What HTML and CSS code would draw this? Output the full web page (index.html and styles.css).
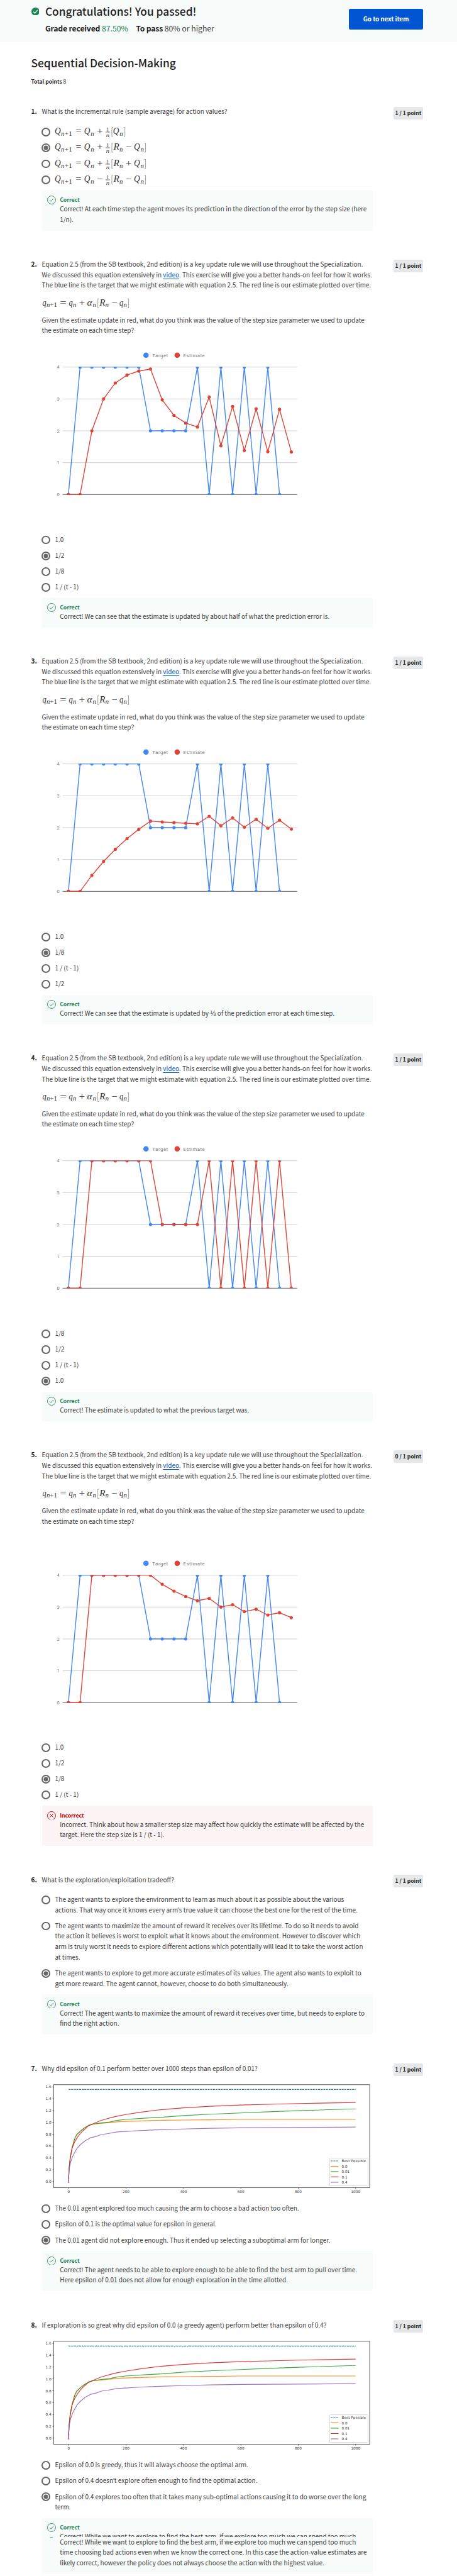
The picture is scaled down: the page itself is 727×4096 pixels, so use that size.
FILE: index.html
```html
<!DOCTYPE html>
<html lang="en">
<head>
<meta charset="utf-8">
<title>Sequential Decision-Making</title>
<link rel="stylesheet" href="styles.css">
</head>
<body>
<svg class="defs" width="0" height="0">
  <symbol id="ok" viewBox="0 0 18 18"><circle cx="9" cy="9" r="8.4" fill="none" stroke="#1f8354" stroke-width="1.1"/><path d="M5.2 9.4 7.8 12 12.7 6.3" fill="none" stroke="#1f8354" stroke-width="1.1"/></symbol>
  <symbol id="bad" viewBox="0 0 18 18"><circle cx="9" cy="9" r="8.4" fill="none" stroke="#d30001" stroke-width="1.2"/><path d="M5.2 5.2 12.8 12.8M12.8 5.2 5.2 12.8" fill="none" stroke="#d30001" stroke-width="1.2"/></symbol>
</svg>
<div class="page">
  <header class="banner">
    <svg class="banner-icon" viewBox="0 0 16 16"><circle cx="8" cy="8" r="8" fill="#1f8354"/><path d="M4 8.4 6.9 11.2 12 5.2" fill="none" stroke="#fff" stroke-width="1.7"/></svg>
    <div class="banner-text">
      <h1>Congratulations! You passed!</h1>
      <p class="grade"><b>Grade received</b> <span class="score">87.50%</span><b class="pass">To pass</b> 80% or higher</p>
    </div>
    <button class="next">Go to next item</button>
  </header>

  <main>
    <h2>Sequential Decision-Making</h2>
    <p class="total"><b>Total points</b> 8</p>

    <section class="question">
      <div class="num">1.</div>
      <div class="body">
        <p>What is the incremental rule (sample average) for action values?</p>
        <ul class="options math">
          <li><i class="radio"></i><span data-q="+|Q"></span></li>
          <li><i class="radio on"></i><span data-q="+|R−Q"></span></li>
          <li><i class="radio"></i><span data-q="+|R+Q"></span></li>
          <li><i class="radio"></i><span data-q="−|R−Q"></span></li>
        </ul>
        <div class="feedback"><svg class="mark"><use href="#ok"/></svg><div><h3>Correct</h3><p>Correct! At each time step the agent moves its prediction in the direction of the error by the step size (here<br>1/n).</p></div></div>
      </div>
      <div class="badge">1 / 1 point</div>
    </section>

    <section class="question">
      <div class="num">2.</div>
      <div class="body">
        <p>Equation 2.5 (from the SB textbook, 2nd edition) is a key update rule we will use throughout the Specialization.<br>We discussed this equation extensively in <a href="#">video</a>. This exercise will give you a better hands-on feel for how it works.<br>The blue line is the target that we might estimate with equation 2.5. The red line is our estimate plotted over time.</p>
        <div class="equation"></div>
        <p>Given the estimate update in red, what do you think was the value of the step size parameter we used to update<br>the estimate on each time step?</p>
        <div class="chart" data-step="half"></div>
        <ul class="options">
          <li><i class="radio"></i>1.0</li>
          <li><i class="radio on"></i>1/2</li>
          <li><i class="radio"></i>1/8</li>
          <li><i class="radio"></i>1 / (t - 1)</li>
        </ul>
        <div class="feedback"><svg class="mark"><use href="#ok"/></svg><div><h3>Correct</h3><p>Correct! We can see that the estimate is updated by about half of what the prediction error is.</p></div></div>
      </div>
      <div class="badge">1 / 1 point</div>
    </section>

    <section class="question">
      <div class="num">3.</div>
      <div class="body">
        <p>Equation 2.5 (from the SB textbook, 2nd edition) is a key update rule we will use throughout the Specialization.<br>We discussed this equation extensively in <a href="#">video</a>. This exercise will give you a better hands-on feel for how it works.<br>The blue line is the target that we might estimate with equation 2.5. The red line is our estimate plotted over time.</p>
        <div class="equation"></div>
        <p>Given the estimate update in red, what do you think was the value of the step size parameter we used to update<br>the estimate on each time step?</p>
        <div class="chart" data-step="eighth"></div>
        <ul class="options">
          <li><i class="radio"></i>1.0</li>
          <li><i class="radio on"></i>1/8</li>
          <li><i class="radio"></i>1 / (t - 1)</li>
          <li><i class="radio"></i>1/2</li>
        </ul>
        <div class="feedback"><svg class="mark"><use href="#ok"/></svg><div><h3>Correct</h3><p>Correct! We can see that the estimate is updated by <span class="frac">⅛</span> of the prediction error at each time step.</p></div></div>
      </div>
      <div class="badge">1 / 1 point</div>
    </section>

    <section class="question">
      <div class="num">4.</div>
      <div class="body">
        <p>Equation 2.5 (from the SB textbook, 2nd edition) is a key update rule we will use throughout the Specialization.<br>We discussed this equation extensively in <a href="#">video</a>. This exercise will give you a better hands-on feel for how it works.<br>The blue line is the target that we might estimate with equation 2.5. The red line is our estimate plotted over time.</p>
        <div class="equation"></div>
        <p>Given the estimate update in red, what do you think was the value of the step size parameter we used to update<br>the estimate on each time step?</p>
        <div class="chart" data-step="one"></div>
        <ul class="options">
          <li><i class="radio"></i>1/8</li>
          <li><i class="radio"></i>1/2</li>
          <li><i class="radio"></i>1 / (t - 1)</li>
          <li><i class="radio on"></i>1.0</li>
        </ul>
        <div class="feedback"><svg class="mark"><use href="#ok"/></svg><div><h3>Correct</h3><p>Correct! The estimate is updated to what the previous target was.</p></div></div>
      </div>
      <div class="badge">1 / 1 point</div>
    </section>

    <section class="question">
      <div class="num">5.</div>
      <div class="body">
        <p>Equation 2.5 (from the SB textbook, 2nd edition) is a key update rule we will use throughout the Specialization.<br>We discussed this equation extensively in <a href="#">video</a>. This exercise will give you a better hands-on feel for how it works.<br>The blue line is the target that we might estimate with equation 2.5. The red line is our estimate plotted over time.</p>
        <div class="equation"></div>
        <p>Given the estimate update in red, what do you think was the value of the step size parameter we used to update<br>the estimate on each time step?</p>
        <div class="chart spaced" data-step="average"></div>
        <ul class="options">
          <li><i class="radio"></i>1.0</li>
          <li><i class="radio"></i>1/2</li>
          <li><i class="radio on"></i>1/8</li>
          <li><i class="radio"></i>1 / (t - 1)</li>
        </ul>
        <div class="feedback wrong"><svg class="mark"><use href="#bad"/></svg><div><h3>Incorrect</h3><p>Incorrect. Think about how a smaller step size may affect how quickly the estimate will be affected by the<br>target. Here the step size is 1 / (t - 1).</p></div></div>
      </div>
      <div class="badge">0 / 1 point</div>
    </section>

    <section class="question">
      <div class="num">6.</div>
      <div class="body">
        <p>What is the exploration/exploitation tradeoff?</p>
        <ul class="options prose">
          <li><i class="radio"></i>The agent wants to explore the environment to learn as much about it as possible about the various<br>actions. That way once it knows every arm<span class="apos">’</span>s true value it can choose the best one for the rest of the time.</li>
          <li><i class="radio"></i>The agent wants to maximize the amount of reward it receives over its lifetime. To do so it needs to avoid<br>the action it believes is worst to exploit what it knows about the environment. However to discover which<br>arm is truly worst it needs to explore different actions which potentially will lead it to take the worst action<br>at times.</li>
          <li><i class="radio on"></i>The agent wants to explore to get more accurate estimates of its values. The agent also wants to exploit to<br>get more reward. The agent cannot, however, choose to do both simultaneously.</li>
        </ul>
        <div class="feedback"><svg class="mark"><use href="#ok"/></svg><div><h3>Correct</h3><p>Correct! The agent wants to maximize the amount of reward it receives over time, but needs to explore to<br>find the right action.</p></div></div>
      </div>
      <div class="badge">1 / 1 point</div>
    </section>

    <section class="question">
      <div class="num">7.</div>
      <div class="body">
        <p>Why did epsilon of 0.1 perform better over 1000 steps than epsilon of 0.01?</p>
        <div class="plot"></div>
        <ul class="options">
          <li><i class="radio"></i>The 0.01 agent explored too much causing the arm to choose a bad action too often.</li>
          <li><i class="radio"></i>Epsilon of 0.1 is the optimal value for epsilon in general.</li>
          <li><i class="radio on"></i>The 0.01 agent did not explore enough. Thus it ended up selecting a suboptimal arm for longer.</li>
        </ul>
        <div class="feedback"><svg class="mark"><use href="#ok"/></svg><div><h3>Correct</h3><p>Correct! The agent needs to be able to explore enough to be able to find the best arm to pull over time.<br>Here epsilon of 0.01 does not allow for enough exploration in the time allotted.</p></div></div>
      </div>
      <div class="badge">1 / 1 point</div>
    </section>

    <section class="question">
      <div class="num">8.</div>
      <div class="body">
        <p>If exploration is so great why did epsilon of 0.0 (a greedy agent) perform better than epsilon of 0.4?</p>
        <div class="plot"></div>
        <ul class="options">
          <li><i class="radio"></i>Epsilon of 0.0 is greedy, thus it will always choose the optimal arm.</li>
          <li><i class="radio"></i>Epsilon of 0.4 doesn<span class="apos">’</span>t explore often enough to find the optimal action.</li>
          <li><i class="radio on"></i>Epsilon of 0.4 explores too often that it takes many sub-optimal actions causing it to do worse over the long<br>term.</li>
        </ul>
        <div class="feedback seam"><div class="marks"><svg class="mark"><use href="#ok"/></svg><svg class="mark-edge" viewBox="0 0 18 1.3"><path d="M6.2 .8H11.8" stroke="#1f8354" stroke-width="1"/></svg></div><div><h3>Correct</h3><p class="cut">Correct! While we want to explore to find the best arm, if we explore too much we can spend too much</p><p>Correct! While we want to explore to find the best arm, if we explore too much we can spend too much<br>time choosing bad actions even when we know the correct one. In this case the action-value estimates are<br>likely correct, however the policy does not always choose the action with the highest value.</p></div></div>
      </div>
      <div class="badge">1 / 1 point</div>
    </section>
  </main>
</div>
<script src="charts.js"></script>
</body>
</html>
```
FILE: styles.css
```css
* { box-sizing: border-box; margin: 0; padding: 0; }
html { background: #fff; overflow: hidden; }
body { overflow: hidden; }
.defs { display: block; }
.page {
  zoom: 0.7735;
  width: 940px;
  height: 5295px;
  overflow: hidden;
  font-family: "Noto Sans CJK SC", "Noto Sans", sans-serif;
  font-size: 12.9px;
  line-height: 21.6px;
  color: #3c3c3c;
  white-space: nowrap;
}

.banner {
  display: flex;
  height: 86px;
  padding: 14px 70px 0 64px;
  background: #f7fbf9;
}
.banner-icon { width: 16.5px; height: 16.5px; margin: 1px 12.5px 0 0; }
.banner-text { flex: 1; }
h1, h2 { font-weight: 500; font-size: 22.4px; line-height: 28px; color: #1f1f1f; }
h1 { margin-top: -5px; }
.grade { margin-top: 10px; font-size: 15.8px; line-height: 24px; }
.grade b { color: #1f1f1f; letter-spacing: -0.22px; }
.score { color: #1f8354; }
.grade .pass { margin-left: 16px; }
.next {
  width: 152px;
  height: 43px;
  margin-top: 4px;
  border: 0;
  border-radius: 3px;
  background: #0056d2;
  color: #fff;
  font: bold 12.9px/42px "Noto Sans CJK SC", "Noto Sans", sans-serif;
  letter-spacing: -0.15px;
}

main { padding: 28px 70px 0 64px; }
h2 { line-height: 32px; margin-top: 0; }
.total { margin-top: 10px; margin-bottom: 41px; font-size: 11px; color: #1f1f1f; }

.question {
  display: grid;
  grid-template-columns: 22px 682px 1fr;
  margin-bottom: 58.6px;
}
.num { font-weight: bold; color: #1f1f1f; }
.badge {
  justify-self: end;
  width: 61px;
  height: 26px;
  margin-top: 1px;
  border-radius: 3px;
  background: #e5e7e8;
  color: #1f1f1f;
  font-weight: bold;
  font-size: 11.1px;
  line-height: 24.5px;
  text-align: center;
}
a { color: #0056d2; text-underline-offset: 2px; }

.equation { height: 49.8px; padding-top: 14px; }
.equation svg, .chart svg, .plot svg, .options svg { display: block; overflow: visible; }
.chart { height: 408px; }
.chart.spaced { height: 443.6px; padding-top: 35.6px; }
.plot { height: 266.6px; }

.options { list-style: none; display: grid; gap: 10.8px; }
.options li { position: relative; padding-left: 27px; }
.options.math { margin-top: 19.8px; gap: 11px; }
.options.math li { height: 21.7px; }
.options.prose { margin-top: 19px; }
.radio {
  position: absolute;
  left: -0.3px;
  top: 2.5px;
  width: 18px;
  height: 18px;
  border: 2.6px solid #666;
  border-radius: 50%;
}
.radio.on { background: radial-gradient(circle, #666 0 4.3px, transparent 4.9px); }

.feedback {
  display: flex;
  gap: 8px;
  width: 680px;
  margin: 11.6px 0 0 1px;
  padding: 10.8px 0 12px 10px;
  background: #f7fbf9;
}
.feedback.wrong { background: #fdf5f5; }
.mark { display: block; flex: none; width: 18px; height: 18px; }
h3 { font-size: 11.3px; line-height: 16.8px; letter-spacing: -0.1px; color: #1f8354; }
.wrong h3 { color: #d30001; }
.cut { height: 11.6px; overflow: hidden; margin-top: -0.6px; }
.mark-edge { display: block; width: 18px; height: 1.3px; margin-top: 10px; }
.frac { font-family: "DejaVu Sans", sans-serif; font-size: 12.6px; line-height: 1; }
.apos { font-family: "Open Sans", "Noto Sans", sans-serif; line-height: 1; }

.serif { font-family: "Liberation Serif", serif; font-size: 18px; fill: #333; }
.serif .v { font-style: italic; }
.serif .s { font-size: 12.5px; }
.serif .f { font-size: 11.5px; }
.axis { font-family: Roboto, sans-serif; font-size: 9.8px; fill: #808080; }
.legend { font-family: Roboto, sans-serif; font-size: 10px; fill: #757575; }
.tick { font-family: "DejaVu Sans", sans-serif; font-size: 7.4px; fill: #333; }
```
FILE: charts.js
```javascript
// Formula pieces: [text, x, width, kind], kind: v variable, s subscript, o operator
function pieces(list, base) {
  return list.map(([t, x, w, k]) => {
    if (t === '[' || t === ']') {
      const d = t === '[' ? `M${x + w} ${base - 14}H${x + .6}V${base + 4.6}H${x + w}` : `M${x} ${base - 14}H${x + w - .6}V${base + 4.6}H${x}`;
      return `<path d="${d}" fill="none" stroke="#777" stroke-width=".9"/>`;
    }
    const cls = { v: 'v', s: 's', sv: 's v', o: '' }[k];
    const dy = k[0] === 's' ? 3 : 0;
    return `<text class="${cls}" x="${x}" y="${base + dy}" textLength="${w}" lengthAdjust="spacingAndGlyphs">${t}</text>`;
  }).join('');
}

document.querySelectorAll('[data-q]').forEach(el => {
  const [sign, inner] = el.dataset.q.split('|');
  const list = [['Q', 0, 12.5, 'v'], ['n', 13, 7, 'sv'], ['+1', 20.5, 15.5, 's'], ['=', 43, 12, 'o'], ['Q', 60.5, 12.5, 'v'], ['n', 74, 7, 'sv'], [sign, 87, 12, 'o'], ['[', 117, 3, 'b']];
  if (inner === 'Q') list.push(['Q', 120, 12.5, 'v'], ['n', 133.5, 7, 'sv'], [']', 142, 3, 'b']);
  else list.push(['R', 121, 12, 'v'], ['n', 133.2, 7, 'sv'], [inner[1], 146, 12, 'o'], ['Q', 163, 12.5, 'v'], ['n', 176.5, 7, 'sv'], [']', 184.5, 3, 'b']);
  el.innerHTML = `<svg class="serif" width="190" height="21.6">${pieces(list, 16)}
    <text class="f" x="106" y="9.8">1</text><path d="M104.5 11.6H113.5" stroke="#444" stroke-width="1"/>
    <text class="f v" x="105.6" y="21.6" textLength="6.8" lengthAdjust="spacingAndGlyphs">n</text></svg>`;
});

document.querySelectorAll('.equation').forEach(el => {
  el.innerHTML = `<svg class="serif" width="190" height="24">${pieces([
    ['q', .5, 8, 'v'], ['n', 9, 7, 'sv'], ['+1', 16, 15, 's'], ['=', 37, 13, 'o'], ['q', 55, 8, 'v'], ['n', 63.3, 7, 'sv'],
    ['+', 75.5, 12.5, 'o'], ['α', 92.5, 10.5, 'v'], ['n', 104, 7, 'sv'], ['[', 114, 3, 'b'], ['R', 118, 12, 'v'], ['n', 130, 7, 'sv'],
    ['−', 143, 12, 'o'], ['q', 159, 8, 'v'], ['n', 167.5, 7, 'sv'], [']', 175.5, 3, 'b']], 16.7)}</svg>`;
});

// Target signal and the estimates produced by each step size
const target = [0, 4, 4, 4, 4, 4, 4, 2, 2, 2, 2, 4, 0, 4, 0, 4, 0, 4, 0];
const steps = { half: () => .5, eighth: () => .125, one: () => 1, average: n => n ? 1 / n : 1 };

function series(values, color, clip) {
  const pts = values.map((v, i) => [(54 + i * 24.13).toFixed(1), (326.2 - v * 65.5).toFixed(1)]);
  return `<g clip-path="url(#${clip})"><polyline points="${pts.join(' ')}" fill="none" stroke="${color}" stroke-width="1.8"/>` +
    pts.map(([x, y]) => `<circle cx="${x}" cy="${y}" r="3.3" fill="${color}"/>`).join('') + '</g>';
}

document.querySelectorAll('.chart').forEach((el, c) => {
  const est = [0];
  target.forEach((t, n) => est.push(est[n] + steps[el.dataset.step](n) * (t - est[n])));
  let s = `<svg width="681" height="408"><clipPath id="c${c}"><rect x="40" y="63.6" width="490" height="263.4"/></clipPath>`;
  for (let v = 0; v < 5; v++) {
    const y = 326.2 - v * 65.5;
    s += `<path d="M42 ${y}H524.5" stroke="${v ? '#ccc' : '#555'}" stroke-width="1.2"/><text class="axis" x="36" y="${y + 3.6}" text-anchor="end">${v}</text>`;
  }
  s += series(target, '#4285f4', 'c' + c) + series(est, '#db4437', 'c' + c);
  s += `<circle cx="213.7" cy="39.7" r="5.6" fill="#4285f4"/><text class="legend" x="226.7" y="43.6" textLength="32">Target</text>
    <circle cx="277.8" cy="39.7" r="5.6" fill="#db4437"/><text class="legend" x="290.4" y="43.6" textLength="44">Estimate</text></svg>`;
  el.innerHTML = s;
});

// Average reward curves, in plot units
const curves = [
  ['#ff7f0e', '234,745 236,680 240,615 246,560 255,500 262,475 275,452 288,434 305,416 318,410 345,406 400,396 430,393 500,389 560,386 628,385 720,383 824,381 1219,381'],
  ['#2ca02c', '234,745 236,680 240,615 246,560 255,500 262,475 275,452 288,434 305,416 318,410 345,403 375,397 400,387 430,381 500,373 560,367 628,357 720,349 824,341 920,334 1022,327 1219,316'],
  ['#d62728', '234,773 236,690 240,620 246,560 255,520 265,490 275,466 285,448 300,424 318,408 345,388 380,370 400,361 430,351 480,337 550,321 628,310 720,300 824,292 920,288 1022,283 1219,277'],
  ['#9467bd', '234,773 234,745 237,680 241,645 248,610 255,585 262,562 275,536 290,514 308,495 330,485 345,475 370,468 400,458 430,455 470,451 520,446 628,440 720,436 824,433 1022,431 1219,428']
];

document.querySelectorAll('.plot').forEach(el => {
  let s = '<svg width="681" height="266"><rect x="23.9" y="23" width="649.8" height="211.8" fill="none" stroke="#444" stroke-width="1.1"/>';
  for (let i = 0; i <= 8; i++) {
    const y = 222.1 - i * 24.33;
    s += `<path d="M21.4 ${y}H24" stroke="#333" stroke-width=".9"/><text class="tick" x="18.8" y="${y + 2.7}" text-anchor="end">${(i * .2).toFixed(1)}</text>`;
  }
  for (let i = 0; i <= 5; i++) {
    const x = 54.6 + i * 118.04;
    s += `<path d="M${x} 234.8V237.4" stroke="#333" stroke-width=".9"/><text class="tick" x="${x}" y="245.2" text-anchor="middle">${i * 200}</text>`;
  }
  s += '<path d="M54.5 32.8H644.7" stroke="#1f77b4" stroke-width="1.4" stroke-dasharray="4 1.4"/>';
  curves.forEach(([color, pts]) => {
    const p = pts.split(' ').map(q => { const [x, y] = q.split(',').map(Number); return (x / 1.668 - 86).toFixed(1) + ',' + (y / 3 - 32.6).toFixed(1); }).join(' ');
    s += `<polyline points="${p}" fill="none" stroke="${color}" stroke-width="1.5" stroke-opacity=".9" stroke-linejoin="round"/>`;
  });
  s += '<rect x="591.3" y="174" width="79" height="57" rx="1.5" fill="#fff" stroke="#ccc" stroke-width="1"/>';
  [['#1f77b4', 'Best Possible'], ['#ff7f0e', '0.0'], ['#2ca02c', '0.01'], ['#d62728', '0.1'], ['#9467bd', '0.4']].forEach(([color, name], i) => {
    const y = 179.6 + i * 11;
    s += `<path d="M593.5 ${y}H609.5" stroke="${color}" stroke-width="1.4" ${i ? '' : 'stroke-dasharray="4 1.6"'}/><text class="tick" x="616" y="${y + 2.7}"${i ? '' : ' textLength="50"'}>${name}</text>`;
  });
  el.innerHTML = s + '</svg>';
});
```
